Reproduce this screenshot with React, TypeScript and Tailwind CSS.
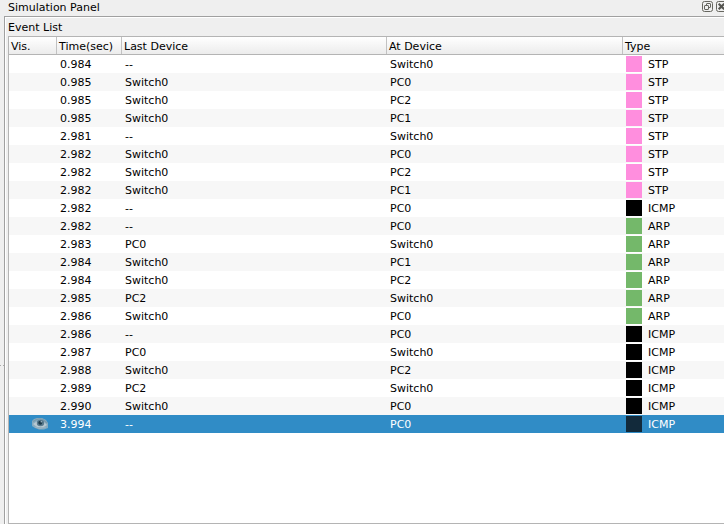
type EventRow = [time: string, last: string, at: string, type: 'STP' | 'ICMP' | 'ARP'];

const rows: EventRow[] = [
  ['0.984', '--', 'Switch0', 'STP'],
  ['0.985', 'Switch0', 'PC0', 'STP'],
  ['0.985', 'Switch0', 'PC2', 'STP'],
  ['0.985', 'Switch0', 'PC1', 'STP'],
  ['2.981', '--', 'Switch0', 'STP'],
  ['2.982', 'Switch0', 'PC0', 'STP'],
  ['2.982', 'Switch0', 'PC2', 'STP'],
  ['2.982', 'Switch0', 'PC1', 'STP'],
  ['2.982', '--', 'PC0', 'ICMP'],
  ['2.982', '--', 'PC0', 'ARP'],
  ['2.983', 'PC0', 'Switch0', 'ARP'],
  ['2.984', 'Switch0', 'PC1', 'ARP'],
  ['2.984', 'Switch0', 'PC2', 'ARP'],
  ['2.985', 'PC2', 'Switch0', 'ARP'],
  ['2.986', 'Switch0', 'PC0', 'ARP'],
  ['2.986', '--', 'PC0', 'ICMP'],
  ['2.987', 'PC0', 'Switch0', 'ICMP'],
  ['2.988', 'Switch0', 'PC2', 'ICMP'],
  ['2.989', 'PC2', 'Switch0', 'ICMP'],
  ['2.990', 'Switch0', 'PC0', 'ICMP'],
  ['3.994', '--', 'PC0', 'ICMP'],
];

const swatches = { STP: 'bg-[#ff8ede]', ICMP: 'bg-black', ARP: 'bg-[#74b86a]' };

const columns = 'grid grid-cols-[48px_65px_265px_236px_1fr] grid-rows-[100%]';

function EyeIcon() {
  return (
    <svg width="16" height="12" viewBox="0 0 16 12" aria-hidden="true">
      <path d="M0 3 2 1 5 0H10L14 2 16 5V10L12 11.5H7L3 10 0 8Z" fill="#86abc0" />
      <path d="M1 3.5Q6-.5 11 1.5L15 5" fill="none" stroke="#7c9aab" strokeWidth="1.3" />
      <path d="M1 6Q6 1.5 12 4L15 7 11 9.5 5 9Z" fill="#b8c9d2" />
      <ellipse cx="8.5" cy="5" rx="3.7" ry="3.2" fill="#5a7b8e" />
      <circle cx="8.3" cy="4.8" r="2" fill="#1d394a" />
      <circle cx="9.3" cy="3.8" r=".8" fill="#a6bfcc" />
      <path d="M3 9 8 10.5 14 9" fill="none" stroke="#9eb5c2" strokeWidth="1" />
    </svg>
  );
}

function RestoreIcon() {
  return (
    <svg width="11" height="11" viewBox="0 0 11 11" fill="none" stroke="#66665f" aria-hidden="true">
      <rect x=".5" y=".5" width="10" height="10" rx="2" />
      <path d="M4.5 4V3Q4.5 2.5 5 2.5H8Q8.5 2.5 8.5 3V6Q8.5 6.5 8 6.5H7" />
      <rect x="2.5" y="4.5" width="4" height="4" rx=".5" />
    </svg>
  );
}

function CloseIcon() {
  return (
    <svg width="11" height="11" viewBox="0 0 11 11" fill="none" stroke="#66665f" aria-hidden="true">
      <rect x=".5" y=".5" width="10" height="10" rx="2" />
      <path d="M2.7 2.7 8.3 8.3M8.3 2.7 2.7 8.3" stroke="#555550" strokeWidth="2.2" />
    </svg>
  );
}

export default function App() {
  return (
    <div className="flex h-[524px] w-[724px] flex-col overflow-hidden bg-[#efefef] font-['DejaVu_Sans',sans-serif] text-[11px] text-black">
      <div className="flex h-4 shrink-0 items-start justify-between pl-2">
        <span className="leading-[15px]">Simulation Panel</span>
        <div className="-mr-[3px] flex gap-[3px] pt-px">
          <RestoreIcon />
          <CloseIcon />
        </div>
      </div>
      <div className="flex min-h-0 flex-1">
        <div className="flex w-1 shrink-0 items-start justify-between pt-[349px]">
          <i className="h-px w-px bg-[#aaaaaa]" />
          <i className="h-px w-px bg-[#aaaaaa]" />
        </div>
        <div className="flex min-w-0 flex-1 flex-col border-l border-t border-[#a0a0a0]">
          <div className="flex min-h-0 flex-1 flex-col border-l border-t border-white pl-[2px]">
            <div className="h-[18px] shrink-0 leading-[19px]">Event List</div>
            <div className="min-h-0 flex-1 border-y border-l border-[#b4b4b4] bg-white">
              <div className={`${columns} h-[18px] border-b border-[#b4b4b4] bg-linear-to-b from-white to-[#ececec] leading-[19px]`}>
                <div className="border-r border-[#c2c2c2] pl-[2px]">Vis.</div>
                <div className="border-r border-[#c2c2c2] pl-[2px]">Time(sec)</div>
                <div className="border-r border-[#c2c2c2] pl-[2px]">Last Device</div>
                <div className="border-r border-[#c2c2c2] pl-[2px]">At Device</div>
                <div className="pl-[2px]">Type</div>
              </div>
              {rows.map(([time, last, at, type], i) => {
                const selected = i === rows.length - 1;
                const tone = selected ? 'bg-[#308cc6] text-white' : i % 2 ? 'bg-[#f7f7f7]' : 'bg-white';
                return (
                  <div key={i} className={`${columns} h-[18px] leading-[19px] ${tone}`}>
                    <div className="flex items-center pl-[23px]">{selected && <EyeIcon />}</div>
                    <div className="pl-[3px]">{time}</div>
                    <div className="pl-[3px]">{last}</div>
                    <div className="pl-[3px]">{at}</div>
                    <div className="flex items-start gap-[6px] pl-[3px]">
                      <span className={`mt-px h-4 w-4 ${selected ? 'bg-[#122a3b]' : swatches[type]}`} />
                      <span>{type}</span>
                    </div>
                  </div>
                );
              })}
            </div>
          </div>
        </div>
      </div>
    </div>
  );
}
